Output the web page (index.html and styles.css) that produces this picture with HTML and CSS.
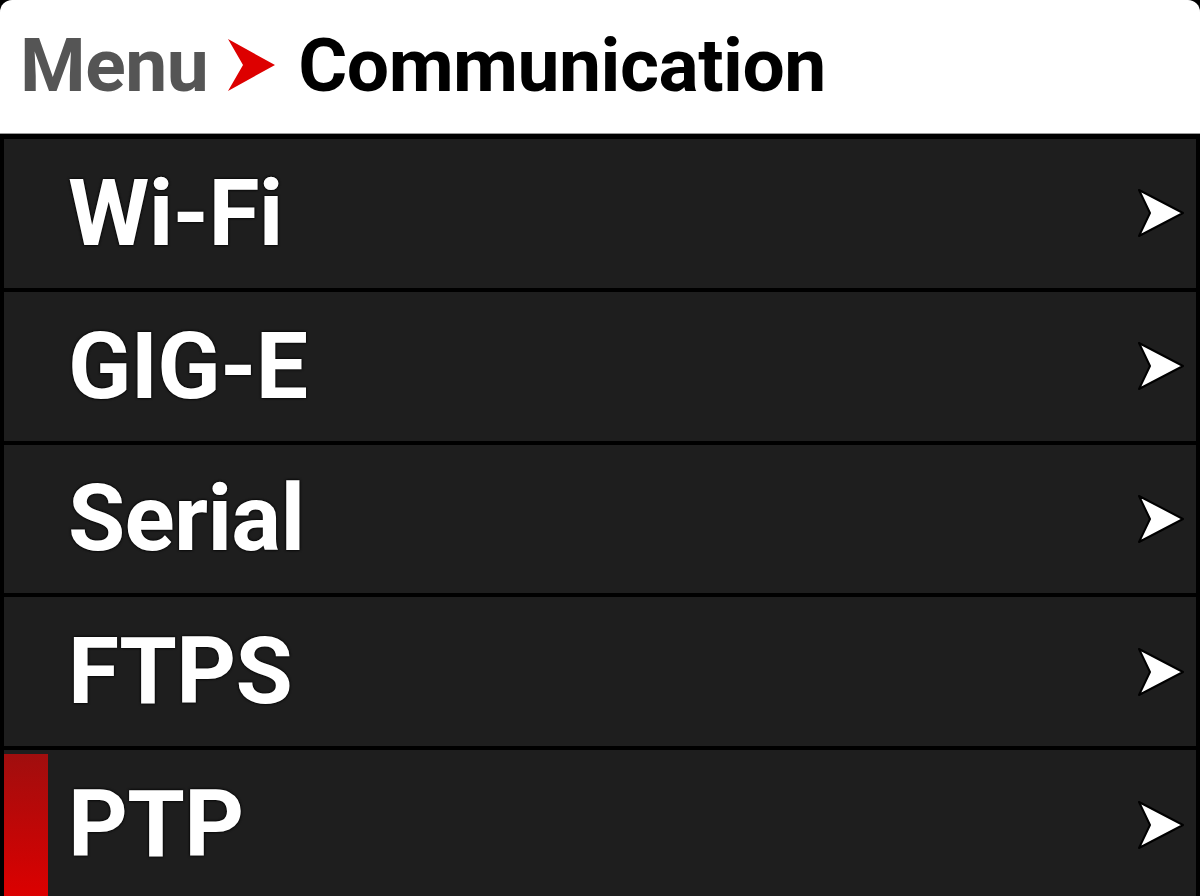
FILE: index.html
```html
<!DOCTYPE html>
<html>
<head>
<meta charset="utf-8">
<link rel="stylesheet" href="styles.css">
</head>
<body>
<div class="screen">
  <header class="crumb">
    <span class="crumb-root">Menu</span>
    <svg class="crumb-sep" viewBox="0 0 48 52" width="48" height="52"><path d="M0 0 L47 26 L0 52 L15 26 Z" fill="#dd0000"/></svg>
    <span class="crumb-current">Communication</span>
  </header>
  <ul class="menu">
    <li class="item"><span class="label">Wi-Fi</span><svg class="chev" viewBox="0 0 46 48" width="46" height="48"><path d="M1 1 L45 24 L1 47 L12 24 Z" fill="#fff" stroke="#000" stroke-width="2" stroke-linejoin="round"/></svg></li>
    <li class="item"><span class="label">GIG-E</span><svg class="chev" viewBox="0 0 46 48" width="46" height="48"><path d="M1 1 L45 24 L1 47 L12 24 Z" fill="#fff" stroke="#000" stroke-width="2" stroke-linejoin="round"/></svg></li>
    <li class="item"><span class="label">Serial</span><svg class="chev" viewBox="0 0 46 48" width="46" height="48"><path d="M1 1 L45 24 L1 47 L12 24 Z" fill="#fff" stroke="#000" stroke-width="2" stroke-linejoin="round"/></svg></li>
    <li class="item"><span class="label">FTPS</span><svg class="chev" viewBox="0 0 46 48" width="46" height="48"><path d="M1 1 L45 24 L1 47 L12 24 Z" fill="#fff" stroke="#000" stroke-width="2" stroke-linejoin="round"/></svg></li>
    <li class="item selected"><span class="label">PTP</span><svg class="chev" viewBox="0 0 46 48" width="46" height="48"><path d="M1 1 L45 24 L1 47 L12 24 Z" fill="#fff" stroke="#000" stroke-width="2" stroke-linejoin="round"/></svg></li>
  </ul>
</div>
</body>
</html>
```
FILE: styles.css
```css
html, body {
  margin: 0;
  padding: 0;
  background: #000;
  width: 1200px;
  height: 896px;
  overflow: hidden;
}
.screen {
  width: 1200px;
  height: 896px;
  display: flex;
  flex-direction: column;
  font-family: Roboto, "Liberation Sans", sans-serif;
}
.crumb {
  height: 134px;
  flex: none;
  background: #fff;
  border-radius: 12px 12px 0 0;
  box-sizing: border-box;
  display: flex;
  align-items: center;
  padding: 0 0 4px 20px;
  font-weight: 700;
  font-size: 75px;
  letter-spacing: -0.5px;
  border-bottom: 1px solid #9a9a9a;
}
.crumb-root {
  color: #555;
}
.crumb-sep {
  margin: 0 22px 0 20px;
  flex: none;
}
.crumb-current {
  color: #000;
}
.menu {
  list-style: none;
  margin: 0;
  padding: 0;
  border-top: 5px solid #000;
  border-left: 4px solid #000;
  border-right: 4px solid #000;
  display: flex;
  flex-direction: column;
}
.item {
  height: 148.8px;
  flex: none;
  background: #1e1e1e;
  border-bottom: 4px solid #000;
  display: flex;
  align-items: center;
  justify-content: space-between;
  padding: 0 12px 0 64px;
  position: relative;
}
.label {
  color: #fff;
  font-weight: 700;
  font-size: 93px;
  letter-spacing: -0.7px;
  text-shadow: 0 0 2px #000, 0 0 3px #000;
  line-height: 1;
}
.chev {
  flex: none;
}
.selected::before {
  content: "";
  position: absolute;
  left: 0;
  top: 4px;
  bottom: 0;
  width: 44px;
  background: linear-gradient(#a00e0e, #dd0000);
}
```
